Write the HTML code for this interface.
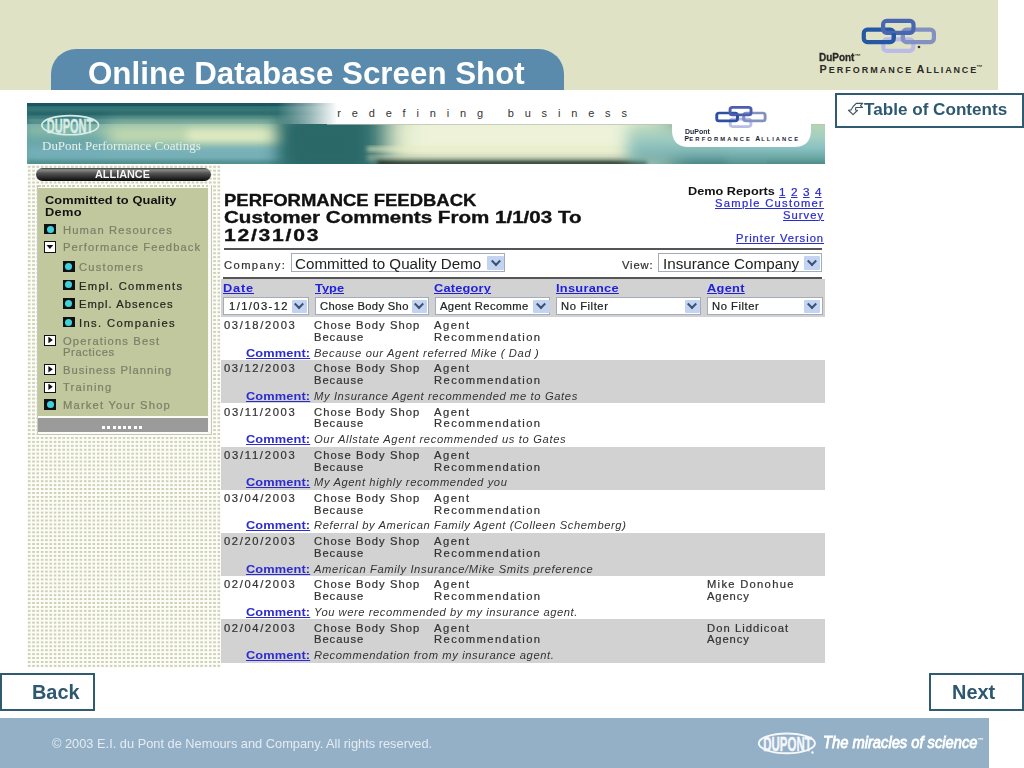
<!DOCTYPE html>
<html><head><meta charset="utf-8"><title>Online Database Screen Shot</title>
<style>
html,body{margin:0;padding:0;}
body{width:1024px;height:768px;overflow:hidden;position:relative;background:#ffffff;font-family:"Liberation Sans",sans-serif;}
.tx{position:absolute;white-space:pre;line-height:normal;transform-origin:0 0;}
.r{position:absolute;}
#beige{left:0;top:0;width:998px;height:90px;background:#e0e2c6;}
#tab{left:51px;top:49px;width:513px;height:41px;background:#5a8aac;border-radius:25px 25px 0 0;}
#toc{left:835px;top:93px;width:185px;height:31px;border:2px solid #2f5a70;background:#fff;}
#back{left:0px;top:673px;width:91px;height:34px;border:2px solid #2f5a70;background:#fff;}
#next{left:929px;top:673px;width:91px;height:34px;border:2px solid #2f5a70;background:#fff;}
#foot{left:0;top:718px;width:989px;height:50px;background:#94b0c7;}
/* screenshot */
#banner{left:27px;top:103px;width:798px;height:61px;overflow:hidden;}

#pill{left:36px;top:168px;width:174.5px;height:12.7px;border-radius:6.5px;background:linear-gradient(180deg,#3a3a3a 0%,#8a8a8a 14%,#555 40%,#2a2a2a 75%,#0a0a0a 100%);}
#panel{left:37px;top:185px;width:172.6px;height:249px;background:#fbfbf6;border:1px solid #c6c6bc;border-top:none;}
#green{left:38.3px;top:188.3px;width:170px;height:227.8px;background:#c1c89e;}
#graybar{left:38.3px;top:418.4px;width:170px;height:14.1px;background:#9b9b9b;}
.ic{position:absolute;width:12px;height:11px;background:#111;}
.ic.c::after{content:"";position:absolute;left:2.5px;top:1.8px;width:7px;height:7px;border-radius:50%;background:#40d2dc;}
.ic.a{background:#fff;border:1.2px solid #111;}
.hr{position:absolute;background:#555;}
.sel{position:absolute;background:#fff;border:1.5px solid #a3acb8;box-sizing:border-box;}
.arr{position:absolute;background:#c2d4f2;box-sizing:border-box;border-radius:1px;}
.arr::after{content:"";position:absolute;left:50%;top:50%;width:5px;height:5px;border-right:2px solid #3d5072;border-bottom:2px solid #3d5072;transform:translate(-50%,-75%) rotate(45deg);}
.gr{position:absolute;background:#d2d2d2;}
.ic.d{background:#fff;border:1.2px solid #111;}
.ic.d::after{content:"";position:absolute;left:1.3px;top:2.4px;width:7.2px;height:4.2px;background:#111;clip-path:polygon(0 0,100% 0,50% 100%);}
.ic.a::after{content:"";position:absolute;left:3.4px;top:1px;width:4.4px;height:6.6px;background:#111;clip-path:polygon(0 0,100% 50%,0 100%);}

</style></head><body>
<div class="r" id="beige"></div>
<div class="r" id="tab"></div>
<div class="r" id="toc"></div>
<div class="r" id="back"></div>
<div class="r" id="next"></div>
<div class="r" id="foot"></div>
<!-- banner -->
<svg class="r" style="left:27px;top:103px" width="798" height="61" viewBox="0 0 798 61">
  <defs>
    <filter id="b2" x="-20%" y="-50%" width="140%" height="200%"><feGaussianBlur stdDeviation="2"/></filter>
    <filter id="b4" x="-20%" y="-80%" width="140%" height="260%"><feGaussianBlur stdDeviation="4"/></filter>
    <filter id="b8" x="-30%" y="-100%" width="160%" height="300%"><feGaussianBlur stdDeviation="8"/></filter>
    <filter id="b12" x="-50%" y="-150%" width="200%" height="400%"><feGaussianBlur stdDeviation="12"/></filter>
    <linearGradient id="wfade" x1="0" x2="1" y1="0" y2="0">
      <stop offset="0" stop-color="#fff" stop-opacity="0"/>
      <stop offset="0.06" stop-color="#fff" stop-opacity="0.5"/>
      <stop offset="0.11" stop-color="#fff" stop-opacity="1"/>
      <stop offset="1" stop-color="#fff" stop-opacity="1"/>
    </linearGradient>
    <linearGradient id="rteal" x1="0" x2="0" y1="0" y2="1">
      <stop offset="0" stop-color="#b6d6b0"/>
      <stop offset="0.3" stop-color="#a6cfc0"/>
      <stop offset="0.6" stop-color="#8ac2c4"/>
      <stop offset="0.85" stop-color="#6aa6a2"/>
      <stop offset="1" stop-color="#4c8c8a"/>
    </linearGradient>
    <clipPath id="bc"><rect x="0" y="0" width="798" height="61"/></clipPath>
  </defs>
  <g clip-path="url(#bc)">
    <rect x="0" y="0" width="798" height="61" fill="#2d6c6e"/>
    <rect x="0" y="21" width="270" height="40" fill="#68a6a6"/>
    <rect x="0" y="0" width="798" height="3" fill="#1c5560"/>
    <rect x="0" y="5" width="798" height="2" fill="#3f8486" filter="url(#b2)"/>
    <rect x="0" y="10" width="798" height="2" fill="#1f5c66" filter="url(#b2)"/>
    <rect x="0" y="14" width="798" height="3" fill="#4a8c8a" filter="url(#b2)"/>
    <rect x="0" y="18" width="798" height="3" fill="#2c6c70"/>
    <rect x="0" y="21" width="270" height="12" fill="#88b8a8" filter="url(#b4)"/>
    <rect x="80" y="22" width="190" height="22" fill="#c6dcb0" filter="url(#b8)"/>
    <rect x="160" y="27" width="110" height="12" fill="#e2ecc2" filter="url(#b4)"/>
    <rect x="0" y="44" width="270" height="12" fill="#76b0bc" filter="url(#b4)"/>
    <rect x="0" y="58" width="300" height="5" fill="#4a8888" filter="url(#b2)"/>
    <rect x="0" y="17" width="260" height="2" fill="#8cc0c0" opacity="0.6" filter="url(#b2)"/>
    <rect x="250" y="10" width="100" height="60" fill="#2c6a6b" filter="url(#b8)"/>
    <rect x="268" y="21" width="62" height="40" fill="#2b6868" filter="url(#b4)"/>
    <rect x="358" y="0" width="287" height="70" fill="#e2ebcc" filter="url(#b12)"/>
    <rect x="385" y="10" width="230" height="45" fill="#edf2d9" filter="url(#b8)"/>
    <rect x="340" y="44" width="280" height="4" fill="#e8ecc0" opacity="0.8" filter="url(#b2)"/>
    <rect x="340" y="52" width="300" height="5" fill="#b8c0a0" opacity="0.6" filter="url(#b2)"/>
    <rect x="350" y="57.5" width="270" height="6" fill="#1e3226" filter="url(#b2)"/>
    <rect x="600" y="21" width="220" height="40" fill="url(#rteal)" filter="url(#b8)"/>
    <rect x="700" y="21" width="100" height="40" fill="url(#rteal)" filter="url(#b4)"/><rect x="740" y="21" width="60" height="40" fill="url(#rteal)"/>
    <rect x="250" y="0" width="548" height="21" fill="url(#wfade)"/>
    <rect x="300" y="21" width="498" height="1" fill="#b8c0b0" opacity="0.7"/>
    <path d="M645 0 H784 V27 Q784 44 767 44 H662 Q645 44 645 27 Z" fill="#fff"/>
  </g>
</svg>
<svg class="r" style="left:27px;top:164px" width="194" height="504" viewBox="27 164 194 504">
  <defs><pattern id="dots" x="27.9" y="165.8" width="4.31" height="3.93" patternUnits="userSpaceOnUse"><rect x="0" y="0" width="2.6" height="2" fill="#cfd0b9"/></pattern></defs>
  <rect x="27" y="164.6" width="193.5" height="503" fill="#fcfdf6"/>
  <rect x="27" y="164.6" width="193.5" height="503" fill="url(#dots)"/>
</svg>
<div class="r" id="pill"></div>
<div class="r" id="panel"></div>
<div class="r" id="green"></div>
<div class="r" id="graybar"></div>
<div class="r" style="left:38.3px;top:185px;width:170px;height:2.2px;background:repeating-linear-gradient(90deg,#cfd0b9 0,#cfd0b9 2.6px,transparent 2.6px,transparent 4.31px);"></div>
<div class="r" style="left:101.5px;top:426.3px;width:42px;height:3px;background:repeating-linear-gradient(90deg,#ffffff 0,#ffffff 3px,transparent 3px,transparent 5.3px);"></div>
<!-- top-right alliance logo -->
<svg class="r" style="left:855px;top:14px" width="90" height="45" viewBox="855 14 90 45">
  <rect x="883.35" y="39.4" width="29.9" height="11.5" rx="3.5" fill="none" stroke="#b9bde6" stroke-width="4.2"/>
  <rect x="902.9" y="29.7" width="31" height="12.4" rx="3.5" fill="none" stroke="#8391c2" stroke-width="4.2"/>
  <rect x="863.8" y="29.7" width="30" height="12.4" rx="3.5" fill="none" stroke="#2558a2" stroke-width="4.2"/>
  <rect x="883.1" y="20.9" width="30.4" height="11.9" rx="3.5" fill="none" stroke="#4b66b0" stroke-width="4.2"/>
  <path d="M893.8 33 V38" stroke="#2558a2" stroke-width="4.2"/>
  <path d="M902.9 36 V41" stroke="#8391c2" stroke-width="4.2"/>
  <circle cx="919" cy="47" r="1.3" fill="#333"/>
</svg>
<!-- banner alliance logo -->
<svg class="r" style="left:700px;top:100px" width="80" height="32" viewBox="700 100 80 32">
  <g transform="translate(715.3 106) scale(0.69 0.64) translate(-861.7 -18.8)">
  <rect x="883.35" y="39.4" width="29.9" height="11.5" rx="3.5" fill="none" stroke="#b9bde6" stroke-width="4.2"/>
  <rect x="902.9" y="29.7" width="31" height="12.4" rx="3.5" fill="none" stroke="#8391c2" stroke-width="4.2"/>
  <rect x="863.8" y="29.7" width="30" height="12.4" rx="3.5" fill="none" stroke="#2d50a0" stroke-width="4.2"/>
  <rect x="883.1" y="20.9" width="30.4" height="11.9" rx="3.5" fill="none" stroke="#4b5eb0" stroke-width="4.2"/>
  <path d="M893.8 33 V38" stroke="#2d50a0" stroke-width="4.2"/>
  <path d="M902.9 36 V41" stroke="#8391c2" stroke-width="4.2"/>
  </g>
</svg>
<!-- DuPont oval banner -->
<svg class="r" style="left:30px;top:105px" width="80" height="35" viewBox="0 0 80 35">
  <ellipse cx="40.2" cy="20.15" rx="28.4" ry="9.6" fill="none" stroke="#d6ede8" stroke-width="1.7"/>
  <text x="16.8" y="27.6" font-family="Liberation Sans" font-size="20.5" font-weight="bold" fill="#d6ede8" stroke="#d6ede8" stroke-width="0.5" textLength="46.5" lengthAdjust="spacingAndGlyphs">DUPONT</text>
</svg>
<!-- DuPont oval footer -->
<svg class="r" style="left:750px;top:725px" width="80" height="35" viewBox="0 0 80 35">
  <ellipse cx="36.9" cy="18.35" rx="28.1" ry="9.9" fill="none" stroke="#f4f8fb" stroke-width="1.9"/>
  <text x="13.3" y="26" font-family="Liberation Sans" font-size="21" font-weight="bold" fill="#f4f8fb" stroke="#f4f8fb" stroke-width="0.5" textLength="48.4" lengthAdjust="spacingAndGlyphs">DUPONT</text>
  <circle cx="62.5" cy="27.5" r="1.2" fill="#f4f8fb"/>
</svg>
<!-- TOC icon -->
<svg class="r" style="left:846px;top:100px" width="20" height="18" viewBox="0 0 20 18">
  <path d="M2.43 10.24 L5.16 9.85 Q6.33 6.6 9.46 4.25 L10.24 3.34 L16.75 3.34 L14.4 5.55 L16.49 7.5 L9.72 7.5 L9.46 9.98 L11.54 10.24 L7.11 14.67 Z" fill="#fff" stroke="#3d525e" stroke-width="1.1" stroke-linejoin="round"/>
</svg>
<div class="gr" style="left:221.00px;top:360.20px;width:604.00px;height:43.20px;"></div>
<div class="gr" style="left:221.00px;top:446.60px;width:604.00px;height:43.20px;"></div>
<div class="gr" style="left:221.00px;top:533.00px;width:604.00px;height:43.20px;"></div>
<div class="gr" style="left:221.00px;top:619.40px;width:604.00px;height:43.20px;"></div>
<div class="gr" style="left:221.00px;top:279.30px;width:604.00px;height:37.70px;"></div>
<div class="hr" style="left:224.00px;top:248.00px;width:598.00px;height:2.00px;"></div>
<div class="hr" style="left:223.00px;top:277.00px;width:599.00px;height:2.00px;"></div>
<div class="sel" style="left:290.50px;top:253.40px;width:214.90px;height:19.10px;"></div>
<div class="arr" style="left:487.40px;top:256.20px;width:16.40px;height:14.30px;"></div>
<div class="sel" style="left:658.00px;top:253.40px;width:163.50px;height:19.10px;"></div>
<div class="arr" style="left:804.40px;top:256.20px;width:16.10px;height:14.30px;"></div>
<div class="sel" style="left:223.20px;top:296.80px;width:86.10px;height:18.00px;"></div>
<div class="arr" style="left:291.60px;top:299.60px;width:15.20px;height:13.20px;"></div>
<div class="sel" style="left:314.60px;top:296.80px;width:114.20px;height:18.00px;"></div>
<div class="arr" style="left:411.50px;top:299.60px;width:15.70px;height:13.20px;"></div>
<div class="sel" style="left:435.30px;top:296.80px;width:115.20px;height:18.00px;"></div>
<div class="arr" style="left:533.00px;top:299.60px;width:16.50px;height:13.20px;"></div>
<div class="sel" style="left:555.80px;top:296.80px;width:145.50px;height:18.00px;"></div>
<div class="arr" style="left:684.50px;top:299.60px;width:15.50px;height:13.20px;"></div>
<div class="sel" style="left:706.60px;top:296.80px;width:116.20px;height:18.00px;"></div>
<div class="arr" style="left:804.10px;top:299.60px;width:16.00px;height:13.20px;"></div>
<div class="ic c" style="left:44.00px;top:223.80px;width:12.00px;height:10.60px;"></div>
<div class="ic d" style="left:44.00px;top:241.40px;width:10.00px;height:9.20px;"></div>
<div class="ic c" style="left:62.70px;top:261.00px;width:12.00px;height:10.60px;"></div>
<div class="ic c" style="left:62.70px;top:279.60px;width:12.00px;height:10.60px;"></div>
<div class="ic c" style="left:62.70px;top:298.20px;width:12.00px;height:10.60px;"></div>
<div class="ic c" style="left:62.70px;top:316.80px;width:12.00px;height:10.60px;"></div>
<div class="ic a" style="left:44.00px;top:334.60px;width:10.00px;height:9.20px;"></div>
<div class="ic a" style="left:44.00px;top:364.00px;width:10.00px;height:9.20px;"></div>
<div class="ic a" style="left:44.00px;top:381.50px;width:10.00px;height:9.20px;"></div>
<div class="ic c" style="left:44.00px;top:399.00px;width:12.00px;height:10.60px;"></div>
<div class="tx" style="left:88.46px;top:55.94px;font-size:31.00px;color:#ffffff;font-weight:bold;transform:scaleX(1.0101)">Online Database Screen Shot</div>
<div class="tx" style="left:864.12px;top:100.01px;font-size:17.00px;color:#2d5870;font-weight:bold;transform:scaleX(1.0068)">Table of Contents</div>
<div class="tx" style="left:32.22px;top:680.95px;font-size:19.50px;color:#2d5870;font-weight:bold;transform:scaleX(1.0207)">Back</div>
<div class="tx" style="left:951.62px;top:681.05px;font-size:19.50px;color:#2d5870;font-weight:bold;transform:scaleX(1.0216)">Next</div>
<div class="tx" style="left:52.18px;top:736.13px;font-size:13.00px;color:#e4ecf2;transform:scaleX(0.9852)">© 2003 E.I. du Pont de Nemours and Company. All rights reserved.</div>
<div class="tx" style="left:823.36px;top:733.52px;font-size:16.00px;color:#ffffff;font-style:italic;transform:scaleX(0.9192);-webkit-text-stroke:0.8px #ffffff">The miracles of science</div>
<div class="tx" style="left:819.46px;top:51.24px;font-size:11.00px;color:#2a2a28;font-weight:bold;transform:scaleX(0.9051);-webkit-text-stroke:0.3px #2a2a28">DuPont</div>
<div class="tx" style="left:819.47px;top:63.02px;font-size:10.80px;color:#2a2a28;font-weight:bold">P</div>
<div class="tx" style="left:828.64px;top:64.65px;font-size:9.00px;color:#2a2a28;font-weight:bold;letter-spacing:2.002px">ERFORMANCE</div>
<div class="tx" style="left:916.57px;top:63.02px;font-size:10.80px;color:#2a2a28;font-weight:bold">A</div>
<div class="tx" style="left:926.14px;top:64.65px;font-size:9.00px;color:#2a2a28;font-weight:bold;letter-spacing:1.837px">LLIANCE</div>
<div class="tx" style="left:854.56px;top:53.07px;font-size:6.00px;color:#2a2a28;font-weight:bold">™</div>
<div class="tx" style="left:976.26px;top:64.07px;font-size:6.00px;color:#2a2a28;font-weight:bold">™</div>
<div class="tx" style="left:977.26px;top:736.57px;font-size:6.00px;color:#ffffff;font-weight:bold">™</div>
<div class="tx" style="left:41.50px;top:138.98px;font-size:12.50px;color:#e6f0ea;font-family:'Liberation Serif',serif;transform:scaleX(1.0391)">DuPont Performance Coatings</div>
<div class="tx" style="left:337.26px;top:106.54px;font-size:11.00px;color:#333333;letter-spacing:10.827px">redefining business</div>
<div class="tx" style="left:684.50px;top:126.81px;font-size:7.50px;color:#1c2236;font-weight:bold;transform:scaleX(0.9282)">DuPont</div>
<div class="tx" style="left:684.53px;top:134.74px;font-size:6.80px;color:#1c2236;font-weight:bold">P</div>
<div class="tx" style="left:689.37px;top:135.65px;font-size:5.80px;color:#1c2236;font-weight:bold;letter-spacing:2.113px">ERFORMANCE</div>
<div class="tx" style="left:755.13px;top:134.74px;font-size:6.80px;color:#1c2236;font-weight:bold">A</div>
<div class="tx" style="left:761.27px;top:135.65px;font-size:5.80px;color:#1c2236;font-weight:bold;letter-spacing:1.940px">LLIANCE</div>
<div class="tx" style="left:95.47px;top:167.82px;font-size:10.80px;color:#f4f4f4;font-weight:bold;transform:scaleX(1.0069)">ALLIANCE</div>
<div class="tx" style="left:44.60px;top:194.95px;font-size:10.00px;color:#111111;font-weight:bold;transform:scaleX(1.2800);letter-spacing:0.082px">Committed to Quality</div>
<div class="tx" style="left:44.60px;top:206.65px;font-size:10.00px;color:#111111;font-weight:bold;transform:scaleX(1.2800);letter-spacing:0.272px">Demo</div>
<div class="tx" style="left:63.20px;top:224.75px;font-size:10.00px;color:#7b7f68;transform:scaleX(1.1200);letter-spacing:1.023px;-webkit-text-stroke:0.20px #7b7f68">Human Resources</div>
<div class="tx" style="left:63.20px;top:242.35px;font-size:10.00px;color:#7b7f68;transform:scaleX(1.1200);letter-spacing:0.971px;-webkit-text-stroke:0.20px #7b7f68">Performance Feedback</div>
<div class="tx" style="left:79.30px;top:261.95px;font-size:10.00px;color:#7b7f68;transform:scaleX(1.1200);letter-spacing:1.092px;-webkit-text-stroke:0.20px #7b7f68">Customers</div>
<div class="tx" style="left:79.30px;top:280.55px;font-size:10.00px;color:#262620;transform:scaleX(1.1200);letter-spacing:1.175px;-webkit-text-stroke:0.20px #262620">Empl. Comments</div>
<div class="tx" style="left:79.30px;top:299.15px;font-size:10.00px;color:#262620;transform:scaleX(1.1200);letter-spacing:0.911px;-webkit-text-stroke:0.20px #262620">Empl. Absences</div>
<div class="tx" style="left:79.30px;top:317.75px;font-size:10.00px;color:#262620;transform:scaleX(1.1200);letter-spacing:1.221px;-webkit-text-stroke:0.20px #262620">Ins. Companies</div>
<div class="tx" style="left:63.20px;top:335.55px;font-size:10.00px;color:#7b7f68;transform:scaleX(1.1200);letter-spacing:1.006px;-webkit-text-stroke:0.20px #7b7f68">Operations Best</div>
<div class="tx" style="left:63.20px;top:347.35px;font-size:10.00px;color:#7b7f68;transform:scaleX(1.1200);letter-spacing:0.562px;-webkit-text-stroke:0.20px #7b7f68">Practices</div>
<div class="tx" style="left:63.20px;top:364.95px;font-size:10.00px;color:#7b7f68;transform:scaleX(1.1200);letter-spacing:0.895px;-webkit-text-stroke:0.20px #7b7f68">Business Planning</div>
<div class="tx" style="left:63.20px;top:382.45px;font-size:10.00px;color:#7b7f68;transform:scaleX(1.1200);letter-spacing:1.038px;-webkit-text-stroke:0.20px #7b7f68">Training</div>
<div class="tx" style="left:63.20px;top:399.95px;font-size:10.00px;color:#7b7f68;transform:scaleX(1.1200);letter-spacing:1.057px;-webkit-text-stroke:0.20px #7b7f68">Market Your Shop</div>
<div class="tx" style="left:224.04px;top:190.86px;font-size:16.50px;color:#111111;font-weight:bold;transform:scaleX(1.1191);-webkit-text-stroke:0.35px #111">PERFORMANCE FEEDBACK</div>
<div class="tx" style="left:224.04px;top:208.46px;font-size:16.50px;color:#111111;font-weight:bold;transform:scaleX(1.2472);-webkit-text-stroke:0.35px #111">Customer Comments From 1/1/03 To</div>
<div class="tx" style="left:224.04px;top:226.06px;font-size:16.50px;color:#111111;font-weight:bold;transform:scaleX(1.2800);letter-spacing:1.358px;-webkit-text-stroke:0.35px #111">12/31/03</div>
<div class="tx" style="left:687.90px;top:186.15px;font-size:10.00px;color:#111111;font-weight:bold;transform:scaleX(1.2715)">Demo Reports</div>
<div class="tx" style="left:779.28px;top:185.69px;font-size:10.50px;color:#2b2bd0;transform:scaleX(1.1200);text-decoration:underline;-webkit-text-stroke:0.20px #2b2bd0">1</div>
<div class="tx" style="left:791.08px;top:185.69px;font-size:10.50px;color:#2b2bd0;transform:scaleX(1.1200);text-decoration:underline;-webkit-text-stroke:0.20px #2b2bd0">2</div>
<div class="tx" style="left:802.88px;top:185.69px;font-size:10.50px;color:#2b2bd0;transform:scaleX(1.1200);text-decoration:underline;-webkit-text-stroke:0.20px #2b2bd0">3</div>
<div class="tx" style="left:814.68px;top:185.69px;font-size:10.50px;color:#2b2bd0;transform:scaleX(1.1200);text-decoration:underline;-webkit-text-stroke:0.20px #2b2bd0">4</div>
<div class="tx" style="left:714.90px;top:198.25px;font-size:10.00px;color:#2b2bd0;transform:scaleX(1.1200);letter-spacing:1.158px;text-decoration:underline;-webkit-text-stroke:0.20px #2b2bd0">Sample Customer</div>
<div class="tx" style="left:782.60px;top:209.70px;font-size:10.00px;color:#2b2bd0;transform:scaleX(1.1200);letter-spacing:0.935px;text-decoration:underline;-webkit-text-stroke:0.20px #2b2bd0">Survey</div>
<div class="tx" style="left:735.60px;top:233.45px;font-size:10.00px;color:#2b2bd0;transform:scaleX(1.1200);letter-spacing:0.869px;text-decoration:underline;-webkit-text-stroke:0.20px #2b2bd0">Printer Version</div>
<div class="tx" style="left:223.60px;top:260.35px;font-size:10.00px;color:#333333;transform:scaleX(1.1200);letter-spacing:1.256px;-webkit-text-stroke:0.20px #333333">Company:</div>
<div class="tx" style="left:621.90px;top:260.35px;font-size:10.00px;color:#333333;transform:scaleX(1.1200);letter-spacing:0.759px;-webkit-text-stroke:0.20px #333333">View:</div>
<div class="tx" style="left:295.44px;top:255.73px;font-size:14.00px;color:#222222;transform:scaleX(1.0829)">Committed to Quality Demo</div>
<div class="tx" style="left:663.14px;top:255.73px;font-size:14.00px;color:#222222;transform:scaleX(1.0872)">Insurance Company</div>
<div class="tx" style="left:223.40px;top:283.15px;font-size:10.00px;color:#2020dd;font-weight:bold;transform:scaleX(1.2800);letter-spacing:0.642px;text-decoration:underline">Date</div>
<div class="tx" style="left:314.60px;top:283.15px;font-size:10.00px;color:#2020dd;font-weight:bold;transform:scaleX(1.2800);letter-spacing:0.022px;text-decoration:underline">Type</div>
<div class="tx" style="left:434.30px;top:283.15px;font-size:10.00px;color:#2020dd;font-weight:bold;transform:scaleX(1.2800);letter-spacing:0.148px;text-decoration:underline">Category</div>
<div class="tx" style="left:555.60px;top:283.15px;font-size:10.00px;color:#2020dd;font-weight:bold;transform:scaleX(1.2800);letter-spacing:0.209px;text-decoration:underline">Insurance</div>
<div class="tx" style="left:706.60px;top:283.15px;font-size:10.00px;color:#2020dd;font-weight:bold;transform:scaleX(1.2800);letter-spacing:0.243px;text-decoration:underline">Agent</div>
<div class="tx" style="left:229.20px;top:301.25px;font-size:10.00px;color:#222222;transform:scaleX(1.1200);letter-spacing:1.257px;-webkit-text-stroke:0.20px #222222">1/1/03-12</div>
<div class="tx" style="left:319.50px;top:301.25px;font-size:10.00px;color:#222222;transform:scaleX(1.1200);letter-spacing:0.297px;-webkit-text-stroke:0.20px #222222">Chose Body Sho</div>
<div class="tx" style="left:440.30px;top:301.25px;font-size:10.00px;color:#222222;transform:scaleX(1.1200);letter-spacing:0.355px;-webkit-text-stroke:0.20px #222222">Agent Recomme</div>
<div class="tx" style="left:560.60px;top:301.25px;font-size:10.00px;color:#222222;transform:scaleX(1.1200);letter-spacing:0.509px;-webkit-text-stroke:0.20px #222222">No Filter</div>
<div class="tx" style="left:711.60px;top:301.25px;font-size:10.00px;color:#222222;transform:scaleX(1.1200);letter-spacing:0.498px;-webkit-text-stroke:0.20px #222222">No Filter</div>
<div class="tx" style="left:223.50px;top:320.25px;font-size:10.00px;color:#333333;transform:scaleX(1.1200);letter-spacing:1.461px;-webkit-text-stroke:0.20px #333333">03/18/2003</div>
<div class="tx" style="left:314.20px;top:320.25px;font-size:10.00px;color:#333333;transform:scaleX(1.1200);letter-spacing:0.956px;-webkit-text-stroke:0.20px #333333">Chose Body Shop</div>
<div class="tx" style="left:314.20px;top:331.95px;font-size:10.00px;color:#333333;transform:scaleX(1.1200);letter-spacing:0.849px;-webkit-text-stroke:0.20px #333333">Because</div>
<div class="tx" style="left:434.30px;top:320.25px;font-size:10.00px;color:#333333;transform:scaleX(1.1200);letter-spacing:1.321px;-webkit-text-stroke:0.20px #333333">Agent</div>
<div class="tx" style="left:434.30px;top:331.95px;font-size:10.00px;color:#333333;transform:scaleX(1.1200);letter-spacing:1.258px;-webkit-text-stroke:0.20px #333333">Recommendation</div>
<div class="tx" style="left:245.85px;top:347.55px;font-size:10.00px;color:#2b2bd0;font-weight:bold;transform:scaleX(1.2800);letter-spacing:0.086px;text-decoration:underline">Comment:</div>
<div class="tx" style="left:313.60px;top:347.55px;font-size:10.00px;color:#333333;font-style:italic;transform:scaleX(1.1200);letter-spacing:0.550px">Because our Agent referred Mike ( Dad )</div>
<div class="tx" style="left:223.50px;top:363.45px;font-size:10.00px;color:#333333;transform:scaleX(1.1200);letter-spacing:1.461px;-webkit-text-stroke:0.20px #333333">03/12/2003</div>
<div class="tx" style="left:314.20px;top:363.45px;font-size:10.00px;color:#333333;transform:scaleX(1.1200);letter-spacing:0.956px;-webkit-text-stroke:0.20px #333333">Chose Body Shop</div>
<div class="tx" style="left:314.20px;top:375.15px;font-size:10.00px;color:#333333;transform:scaleX(1.1200);letter-spacing:0.849px;-webkit-text-stroke:0.20px #333333">Because</div>
<div class="tx" style="left:434.30px;top:363.45px;font-size:10.00px;color:#333333;transform:scaleX(1.1200);letter-spacing:1.321px;-webkit-text-stroke:0.20px #333333">Agent</div>
<div class="tx" style="left:434.30px;top:375.15px;font-size:10.00px;color:#333333;transform:scaleX(1.1200);letter-spacing:1.258px;-webkit-text-stroke:0.20px #333333">Recommendation</div>
<div class="tx" style="left:245.85px;top:390.75px;font-size:10.00px;color:#2b2bd0;font-weight:bold;transform:scaleX(1.2800);letter-spacing:0.086px;text-decoration:underline">Comment:</div>
<div class="tx" style="left:313.60px;top:390.75px;font-size:10.00px;color:#333333;font-style:italic;transform:scaleX(1.1200);letter-spacing:0.550px">My Insurance Agent recommended me to Gates</div>
<div class="tx" style="left:223.50px;top:406.65px;font-size:10.00px;color:#333333;transform:scaleX(1.1200);letter-spacing:1.544px;-webkit-text-stroke:0.20px #333333">03/11/2003</div>
<div class="tx" style="left:314.20px;top:406.65px;font-size:10.00px;color:#333333;transform:scaleX(1.1200);letter-spacing:0.956px;-webkit-text-stroke:0.20px #333333">Chose Body Shop</div>
<div class="tx" style="left:314.20px;top:418.35px;font-size:10.00px;color:#333333;transform:scaleX(1.1200);letter-spacing:0.849px;-webkit-text-stroke:0.20px #333333">Because</div>
<div class="tx" style="left:434.30px;top:406.65px;font-size:10.00px;color:#333333;transform:scaleX(1.1200);letter-spacing:1.321px;-webkit-text-stroke:0.20px #333333">Agent</div>
<div class="tx" style="left:434.30px;top:418.35px;font-size:10.00px;color:#333333;transform:scaleX(1.1200);letter-spacing:1.258px;-webkit-text-stroke:0.20px #333333">Recommendation</div>
<div class="tx" style="left:245.85px;top:433.95px;font-size:10.00px;color:#2b2bd0;font-weight:bold;transform:scaleX(1.2800);letter-spacing:0.086px;text-decoration:underline">Comment:</div>
<div class="tx" style="left:313.60px;top:433.95px;font-size:10.00px;color:#333333;font-style:italic;transform:scaleX(1.1200);letter-spacing:0.578px">Our Allstate Agent recommended us to Gates</div>
<div class="tx" style="left:223.50px;top:449.85px;font-size:10.00px;color:#333333;transform:scaleX(1.1200);letter-spacing:1.544px;-webkit-text-stroke:0.20px #333333">03/11/2003</div>
<div class="tx" style="left:314.20px;top:449.85px;font-size:10.00px;color:#333333;transform:scaleX(1.1200);letter-spacing:0.956px;-webkit-text-stroke:0.20px #333333">Chose Body Shop</div>
<div class="tx" style="left:314.20px;top:461.55px;font-size:10.00px;color:#333333;transform:scaleX(1.1200);letter-spacing:0.849px;-webkit-text-stroke:0.20px #333333">Because</div>
<div class="tx" style="left:434.30px;top:449.85px;font-size:10.00px;color:#333333;transform:scaleX(1.1200);letter-spacing:1.321px;-webkit-text-stroke:0.20px #333333">Agent</div>
<div class="tx" style="left:434.30px;top:461.55px;font-size:10.00px;color:#333333;transform:scaleX(1.1200);letter-spacing:1.258px;-webkit-text-stroke:0.20px #333333">Recommendation</div>
<div class="tx" style="left:245.85px;top:477.15px;font-size:10.00px;color:#2b2bd0;font-weight:bold;transform:scaleX(1.2800);letter-spacing:0.086px;text-decoration:underline">Comment:</div>
<div class="tx" style="left:313.60px;top:477.15px;font-size:10.00px;color:#333333;font-style:italic;transform:scaleX(1.1200);letter-spacing:0.528px">My Agent highly recommended you</div>
<div class="tx" style="left:223.50px;top:493.05px;font-size:10.00px;color:#333333;transform:scaleX(1.1200);letter-spacing:1.461px;-webkit-text-stroke:0.20px #333333">03/04/2003</div>
<div class="tx" style="left:314.20px;top:493.05px;font-size:10.00px;color:#333333;transform:scaleX(1.1200);letter-spacing:0.956px;-webkit-text-stroke:0.20px #333333">Chose Body Shop</div>
<div class="tx" style="left:314.20px;top:504.75px;font-size:10.00px;color:#333333;transform:scaleX(1.1200);letter-spacing:0.849px;-webkit-text-stroke:0.20px #333333">Because</div>
<div class="tx" style="left:434.30px;top:493.05px;font-size:10.00px;color:#333333;transform:scaleX(1.1200);letter-spacing:1.321px;-webkit-text-stroke:0.20px #333333">Agent</div>
<div class="tx" style="left:434.30px;top:504.75px;font-size:10.00px;color:#333333;transform:scaleX(1.1200);letter-spacing:1.258px;-webkit-text-stroke:0.20px #333333">Recommendation</div>
<div class="tx" style="left:245.85px;top:520.35px;font-size:10.00px;color:#2b2bd0;font-weight:bold;transform:scaleX(1.2800);letter-spacing:0.086px;text-decoration:underline">Comment:</div>
<div class="tx" style="left:313.60px;top:520.35px;font-size:10.00px;color:#333333;font-style:italic;transform:scaleX(1.1200);letter-spacing:0.517px">Referral by American Family Agent (Colleen Schemberg)</div>
<div class="tx" style="left:223.50px;top:536.25px;font-size:10.00px;color:#333333;transform:scaleX(1.1200);letter-spacing:1.461px;-webkit-text-stroke:0.20px #333333">02/20/2003</div>
<div class="tx" style="left:314.20px;top:536.25px;font-size:10.00px;color:#333333;transform:scaleX(1.1200);letter-spacing:0.956px;-webkit-text-stroke:0.20px #333333">Chose Body Shop</div>
<div class="tx" style="left:314.20px;top:547.95px;font-size:10.00px;color:#333333;transform:scaleX(1.1200);letter-spacing:0.849px;-webkit-text-stroke:0.20px #333333">Because</div>
<div class="tx" style="left:434.30px;top:536.25px;font-size:10.00px;color:#333333;transform:scaleX(1.1200);letter-spacing:1.321px;-webkit-text-stroke:0.20px #333333">Agent</div>
<div class="tx" style="left:434.30px;top:547.95px;font-size:10.00px;color:#333333;transform:scaleX(1.1200);letter-spacing:1.258px;-webkit-text-stroke:0.20px #333333">Recommendation</div>
<div class="tx" style="left:245.85px;top:563.55px;font-size:10.00px;color:#2b2bd0;font-weight:bold;transform:scaleX(1.2800);letter-spacing:0.086px;text-decoration:underline">Comment:</div>
<div class="tx" style="left:313.60px;top:563.55px;font-size:10.00px;color:#333333;font-style:italic;transform:scaleX(1.1200);letter-spacing:0.551px">American Family Insurance/Mike Smits preference</div>
<div class="tx" style="left:223.50px;top:579.45px;font-size:10.00px;color:#333333;transform:scaleX(1.1200);letter-spacing:1.461px;-webkit-text-stroke:0.20px #333333">02/04/2003</div>
<div class="tx" style="left:314.20px;top:579.45px;font-size:10.00px;color:#333333;transform:scaleX(1.1200);letter-spacing:0.956px;-webkit-text-stroke:0.20px #333333">Chose Body Shop</div>
<div class="tx" style="left:314.20px;top:591.15px;font-size:10.00px;color:#333333;transform:scaleX(1.1200);letter-spacing:0.849px;-webkit-text-stroke:0.20px #333333">Because</div>
<div class="tx" style="left:434.30px;top:579.45px;font-size:10.00px;color:#333333;transform:scaleX(1.1200);letter-spacing:1.321px;-webkit-text-stroke:0.20px #333333">Agent</div>
<div class="tx" style="left:434.30px;top:591.15px;font-size:10.00px;color:#333333;transform:scaleX(1.1200);letter-spacing:1.258px;-webkit-text-stroke:0.20px #333333">Recommendation</div>
<div class="tx" style="left:245.85px;top:606.75px;font-size:10.00px;color:#2b2bd0;font-weight:bold;transform:scaleX(1.2800);letter-spacing:0.086px;text-decoration:underline">Comment:</div>
<div class="tx" style="left:313.60px;top:606.75px;font-size:10.00px;color:#333333;font-style:italic;transform:scaleX(1.1200);letter-spacing:0.489px">You were recommended by my insurance agent.</div>
<div class="tx" style="left:706.60px;top:579.45px;font-size:10.00px;color:#333333;transform:scaleX(1.1200);letter-spacing:1.150px;-webkit-text-stroke:0.20px #333333">Mike Donohue</div>
<div class="tx" style="left:706.60px;top:591.15px;font-size:10.00px;color:#333333;transform:scaleX(1.1200);letter-spacing:0.792px;-webkit-text-stroke:0.20px #333333">Agency</div>
<div class="tx" style="left:223.50px;top:622.65px;font-size:10.00px;color:#333333;transform:scaleX(1.1200);letter-spacing:1.461px;-webkit-text-stroke:0.20px #333333">02/04/2003</div>
<div class="tx" style="left:314.20px;top:622.65px;font-size:10.00px;color:#333333;transform:scaleX(1.1200);letter-spacing:0.956px;-webkit-text-stroke:0.20px #333333">Chose Body Shop</div>
<div class="tx" style="left:314.20px;top:634.35px;font-size:10.00px;color:#333333;transform:scaleX(1.1200);letter-spacing:0.849px;-webkit-text-stroke:0.20px #333333">Because</div>
<div class="tx" style="left:434.30px;top:622.65px;font-size:10.00px;color:#333333;transform:scaleX(1.1200);letter-spacing:1.321px;-webkit-text-stroke:0.20px #333333">Agent</div>
<div class="tx" style="left:434.30px;top:634.35px;font-size:10.00px;color:#333333;transform:scaleX(1.1200);letter-spacing:1.258px;-webkit-text-stroke:0.20px #333333">Recommendation</div>
<div class="tx" style="left:245.85px;top:649.95px;font-size:10.00px;color:#2b2bd0;font-weight:bold;transform:scaleX(1.2800);letter-spacing:0.086px;text-decoration:underline">Comment:</div>
<div class="tx" style="left:313.60px;top:649.95px;font-size:10.00px;color:#333333;font-style:italic;transform:scaleX(1.1200);letter-spacing:0.532px">Recommendation from my insurance agent.</div>
<div class="tx" style="left:706.60px;top:622.65px;font-size:10.00px;color:#333333;transform:scaleX(1.1200);letter-spacing:0.945px;-webkit-text-stroke:0.20px #333333">Don Liddicoat</div>
<div class="tx" style="left:706.60px;top:634.35px;font-size:10.00px;color:#333333;transform:scaleX(1.1200);letter-spacing:0.792px;-webkit-text-stroke:0.20px #333333">Agency</div>
</body></html>
